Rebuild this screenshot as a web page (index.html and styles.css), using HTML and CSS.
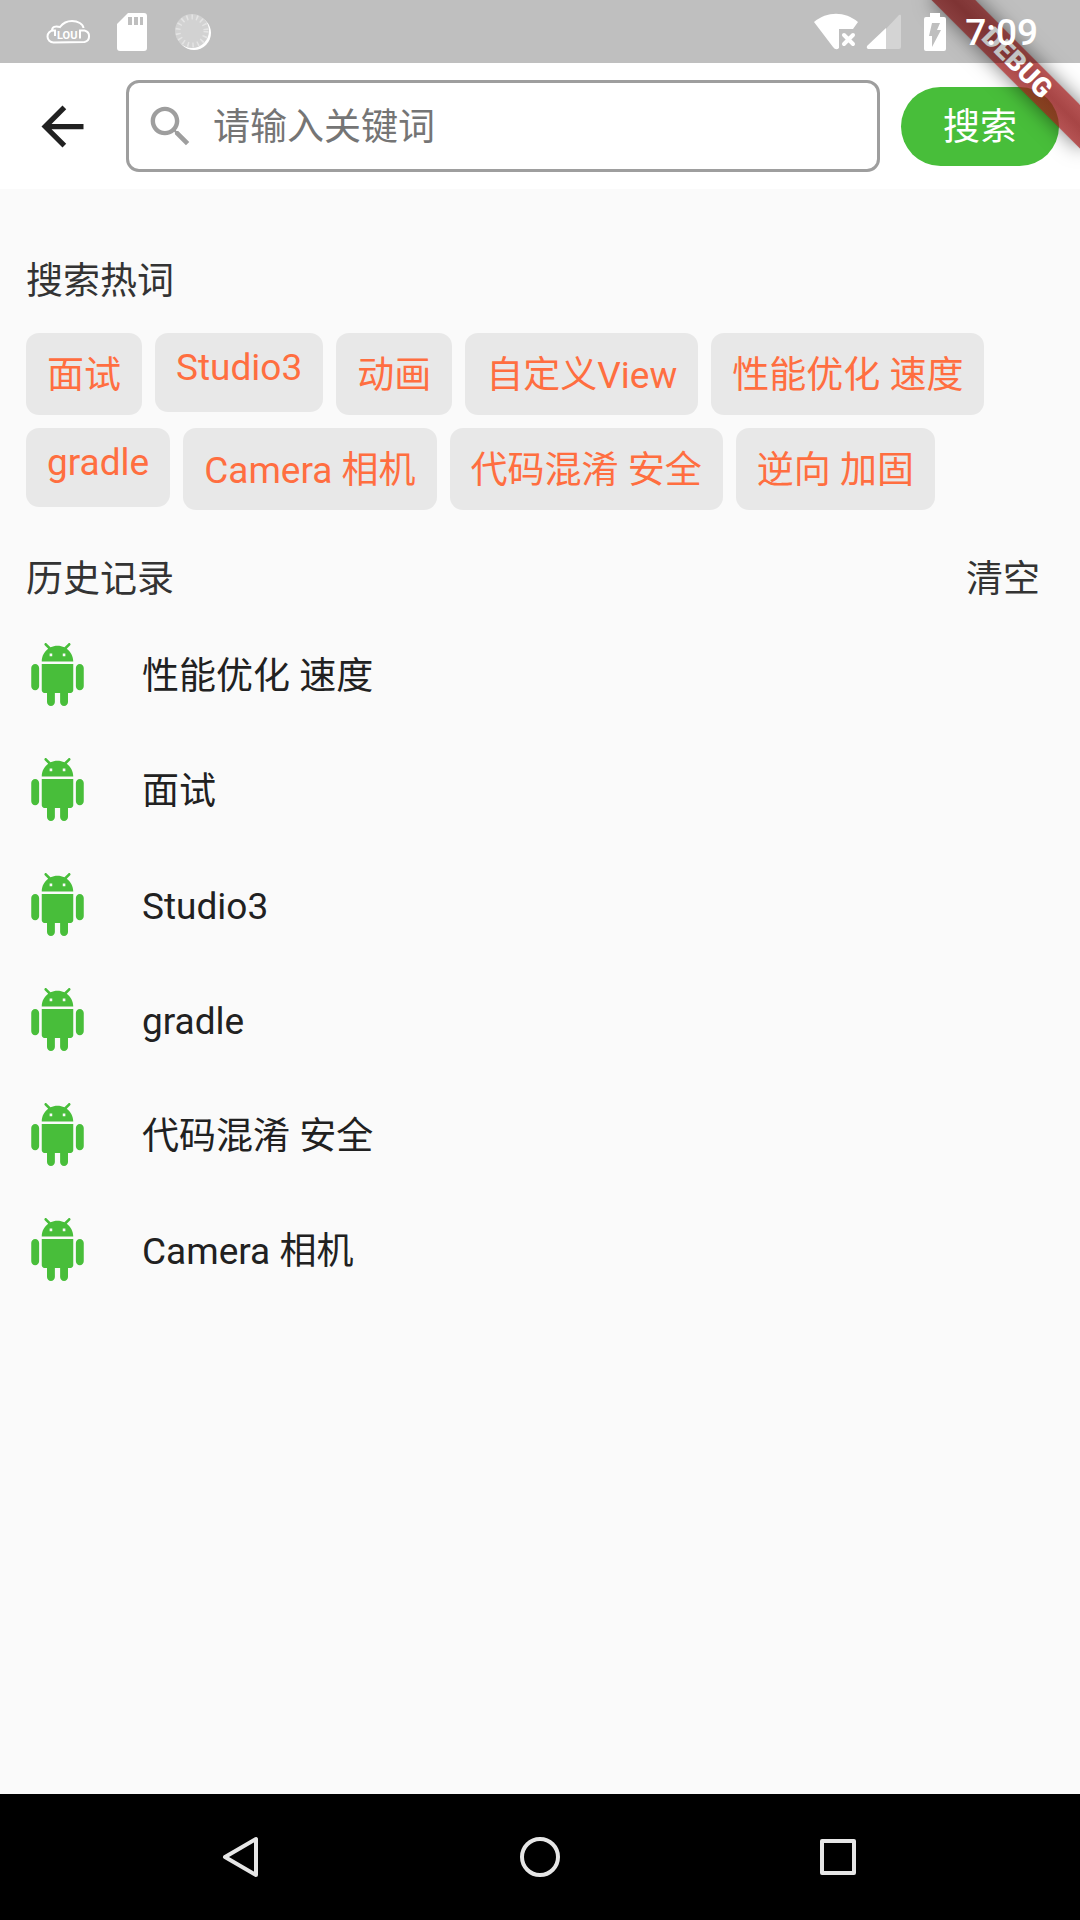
FILE: index.html
```html
<!DOCTYPE html>
<html lang="zh-CN">
<head>
  <meta charset="utf-8">
  <meta name="viewport" content="width=device-width, initial-scale=1">
  <title>搜索</title>
  <link rel="stylesheet" href="styles.css">
</head>
<body>
  <svg class="defs" aria-hidden="true">
    <symbol id="android" viewBox="0 0 24 24">
      <path d="M6 18c0 .55.45 1 1 1h1v3.500c0 .83.67 1.500 1.500 1.500s1.500-.67 1.500-1.500V19h2v3.500c0 .83.67 1.500 1.500 1.500s1.500-.67 1.500-1.500V19h1c.55 0 1-.45 1-1V8H6v10zM3.500 8C2.670 8 2 8.670 2 9.500v7c0 .83.67 1.500 1.500 1.500S5 17.330 5 16.500v-7C5 8.670 4.330 8 3.500 8zm17 0c-.83 0-1.500.67-1.500 1.500v7c0 .83.67 1.500 1.500 1.500s1.500-.67 1.500-1.500v-7c0-.83-.67-1.500-1.500-1.500zm-4.970-5.840l1.300-1.300c.2-.2.2-.51 0-.71-.2-.2-.51-.2-.71 0l-1.480 1.480C13.850 1.230 12.950 1 12 1c-.96 0-1.860.23-2.660.63L7.850.15c-.2-.2-.51-.2-.71 0-.2.2-.2.51 0 .71l1.310 1.310C6.970 3.260 6 5.010 6 7h12c0-1.990-.97-3.750-2.470-4.840zM10 5H9V4h1v1zm5 0h-1V4h1v1z"/>
    </symbol>
  </svg>

  <header class="status-bar">
    <div class="status-left">
      <svg width="46" height="26" viewBox="0 0 46 26" aria-hidden="true">
        <path d="M9 17V11.500H7.500A6 6 0 0 0 7.500 23.500L38.500 23A5.900 5.900 0 0 0 38.500 11.500H34V19.500M6 11.500C6 8 9 6.500 14 8C17 4 20 2 26 2C32 2 37 5 37.500 9" fill="none" stroke="#fff" stroke-width="2"/>
        <text x="11" y="20" class="cloud-text">LOU</text>
      </svg>
      <svg width="32" height="40" viewBox="0 0 32 40" aria-hidden="true">
        <path d="M12 1H28a3 3 0 0 1 3 3V36a3 3 0 0 1-3 3H4a3 3 0 0 1-3-3V12Z" fill="#fff"/>
        <path d="M12 5h4v8h-4zM18 5h4v8h-4zM24 5h3v8h-3z" fill="#bfbfbf"/>
      </svg>
      <svg width="40" height="40" viewBox="-2 0 40 40" aria-hidden="true">
        <circle cx="20" cy="21" r="17" fill="#fff"/>
        <circle cx="18" cy="19" r="17" fill="#d2d2d2"/>
        <circle cx="18" cy="19" r="14" fill="none" stroke="#e4e4e4" stroke-width="5" stroke-dasharray="1.500 3.500"/>
      </svg>
    </div>
    <div class="status-right">
      <svg width="46" height="38" viewBox="0 0 46 38" aria-hidden="true">
        <path d="M1 9C14-2 32-2 45 9L40 16H26V35Q23 38 20 34Z" fill="#fff"/>
        <path d="M31 22l9 9m0-9l-9 9" stroke="#fff" stroke-width="4" stroke-linecap="round"/>
      </svg>
      <svg width="36" height="38" viewBox="0 0 36 38" aria-hidden="true">
        <path d="M1 36L33 2Q35 1 35 3V34Q35 36 33 36Z" fill="#d4d4d4"/>
        <path d="M20 15V36H2Q0 35 1 33Z" fill="#fff"/>
      </svg>
      <svg class="battery" width="22" height="40" viewBox="0 0 22 40" aria-hidden="true">
        <path d="M6 1H16V5H20a2 2 0 0 1 2 2V37a2 2 0 0 1-2 2H2a2 2 0 0 1-2-2V7a2 2 0 0 1 2-2H6Z" fill="#fff"/>
        <path d="M8 11H16L13 18H17L8 35V24H5Z" fill="#bfbfbf"/>
      </svg>
      <time class="clock">7:09</time>
    </div>
  </header>

  <form class="app-bar">
    <button type="button" class="back" aria-label="返回">
      <svg width="63" height="63" viewBox="0 0 24 24" aria-hidden="true"><path d="M20 11H7.830l5.590-5.590L12 4l-8 8 8 8 1.410-1.410L7.830 13H20v-2z" fill="#212121"/></svg>
    </button>
    <label class="field">
      <svg width="53" height="53" viewBox="0 0 24 24" aria-hidden="true"><path d="M15.500 14h-.79l-.28-.27C15.410 12.590 16 11.110 16 9.500 16 5.910 13.090 3 9.500 3S3 5.910 3 9.500 5.910 16 9.500 16c1.610 0 3.090-.59 4.230-1.570l.27.28v.79l5 4.990L20.490 19l-4.990-5zm-6 0C7.010 14 5 11.990 5 9.500S7.010 5 9.500 5 14 7.010 14 9.500 11.990 14 9.500 14z" fill="#9e9e9e"/></svg>
      <input type="text" placeholder="请输入关键词" aria-label="关键词">
    </label>
    <button type="submit" class="submit">搜索</button>
  </form>
  <div class="banner-clip"><div class="banner">DEBUG</div></div>

  <main class="content">
    <section>
      <h2 class="title">搜索热词</h2>
      <div class="chips">
        <button type="button" class="chip">面试</button>
        <button type="button" class="chip chip-latin">Studio3</button>
        <button type="button" class="chip">动画</button>
        <button type="button" class="chip">自定义View</button>
        <button type="button" class="chip">性能优化 速度</button>
        <button type="button" class="chip chip-latin">gradle</button>
        <button type="button" class="chip">Camera 相机</button>
        <button type="button" class="chip">代码混淆 安全</button>
        <button type="button" class="chip">逆向 加固</button>
      </div>
    </section>
    <section>
      <div class="history-head">
        <h2 class="title">历史记录</h2>
        <button type="button" class="clear">清空</button>
      </div>
      <ul class="history">
        <li><svg class="robot" aria-hidden="true"><use href="#android"/></svg><span>性能优化 速度</span></li>
        <li><svg class="robot" aria-hidden="true"><use href="#android"/></svg><span>面试</span></li>
        <li><svg class="robot" aria-hidden="true"><use href="#android"/></svg><span>Studio3</span></li>
        <li><svg class="robot" aria-hidden="true"><use href="#android"/></svg><span>gradle</span></li>
        <li><svg class="robot" aria-hidden="true"><use href="#android"/></svg><span>代码混淆 安全</span></li>
        <li><svg class="robot" aria-hidden="true"><use href="#android"/></svg><span>Camera 相机</span></li>
      </ul>
    </section>
  </main>

  <nav class="nav-bar">
    <button type="button" aria-label="后退">
      <svg width="42" height="42" viewBox="0 0 42 42" aria-hidden="true"><path d="M35 3V39L4 21Z"/></svg>
    </button>
    <button type="button" aria-label="主屏幕">
      <svg width="42" height="42" viewBox="0 0 42 42" aria-hidden="true"><circle cx="21" cy="21" r="18"/></svg>
    </button>
    <button type="button" aria-label="最近任务">
      <svg width="42" height="42" viewBox="0 0 42 42" aria-hidden="true"><path d="M5 5H37V37H5Z"/></svg>
    </button>
  </nav>
</body>
</html>
```
FILE: styles.css
```css
* {
  box-sizing: border-box;
}

body {
  position: relative;
  display: flex;
  flex-direction: column;
  min-height: 100vh;
  margin: 0;
  background: #fafafa;
  color: #212121;
  font: 37px/44px Roboto, "Noto Sans CJK SC", sans-serif;
}

button,
input {
  margin: 0;
  padding: 0;
  border: 0;
  background: none;
  color: inherit;
  font: inherit;
}

svg {
  display: block;
  flex: none;
}

.defs {
  position: absolute;
  width: 0;
  height: 0;
}

/* Translucent bar, painted over the page and the banner */
.status-bar {
  position: relative;
  z-index: 2;
  display: flex;
  justify-content: space-between;
  align-items: center;
  height: 63px;
  padding: 0 42px 0 46px;
  background: rgba(0, 0, 0, 0.236);
  color: #fff;
}

.status-left {
  display: flex;
  align-items: center;
  gap: 24px;
}

.status-right {
  display: flex;
  align-items: center;
  gap: 7px;
}

.cloud-text {
  fill: #fff;
  font: 700 11px Roboto, sans-serif;
}

.battery {
  margin: 0 12px 0 15px;
}

.clock {
  padding-top: 3px;
  font-weight: 500;
}

.app-bar {
  display: flex;
  align-items: center;
  height: 126px;
  padding: 0 21px 0 31px;
  background: #fff;
}

.back {
  margin-right: 32px;
}

.field {
  display: flex;
  flex: 1;
  align-items: center;
  gap: 16px;
  min-width: 0;
  height: 92px;
  margin-right: 21px;
  padding: 0 15px;
  border: 3px solid #9e9e9e;
  border-radius: 13px;
}

.field input {
  flex: 1;
  min-width: 0;
  padding-top: 4px;
  outline: 0;
}

.field input::placeholder {
  color: #757575;
  opacity: 1;
}

.submit {
  height: 79px;
  padding: 4px 42px 0;
  border-radius: 40px;
  background: #48be3a;
  color: #fff;
}

/* Corner ribbon */
.banner-clip {
  position: absolute;
  z-index: 1;
  top: 0;
  right: 0;
  width: 240px;
  height: 240px;
  overflow: hidden;
  pointer-events: none;
}

.banner {
  position: absolute;
  top: 74px;
  right: -105px;
  width: 210px;
  height: 31px;
  background:
    linear-gradient(rgba(183, 28, 28, 0.63), rgba(183, 28, 28, 0.63)),
    linear-gradient(rgba(0, 0, 0, 0.3), rgba(0, 0, 0, 0.45) 50%, rgba(0, 0, 0, 0.3));
  box-shadow: 0 0 20px rgba(0, 0, 0, 0.5);
  color: #fff;
  font-size: 27px;
  font-weight: 900;
  line-height: 31px;
  text-align: center;
  transform: rotate(45deg);
  transform-origin: 50% -74px;
}

.content {
  display: flex;
  flex-direction: column;
  gap: 48px;
  padding: 71px 40px 40px 26px;
}

.title {
  margin: 0;
  color: #333;
  font-size: 37px;
  font-weight: 400;
}

.chips {
  display: flex;
  flex-wrap: wrap;
  align-items: flex-start;
  gap: 13px;
  margin-top: 29px;
}

.chip {
  padding: 4px 21px 0;
  border-radius: 13px;
  background: #e8e8e8;
  color: #ff6e40;
  line-height: 78px;
}

.chip-latin {
  padding: 0 21px 9px;
  line-height: 70px;
}

.history-head {
  display: flex;
  justify-content: space-between;
}

.clear {
  color: #333;
}

.history {
  margin: 15px 0 0;
  padding: 0;
  list-style: none;
}

.history li {
  display: flex;
  align-items: center;
  gap: 53px;
  height: 115px;
}

.history span {
  padding-top: 5px;
}

.robot {
  width: 63px;
  height: 63px;
  fill: #48be3a;
}

.nav-bar {
  display: flex;
  height: 126px;
  margin-top: auto;
  padding: 0 8.6%;
  background: #000;
}

.nav-bar button {
  display: flex;
  flex: 1;
  align-items: center;
  justify-content: center;
}

.nav-bar svg {
  fill: none;
  stroke: #e6e6e6;
  stroke-width: 4;
  stroke-linejoin: round;
}
```
